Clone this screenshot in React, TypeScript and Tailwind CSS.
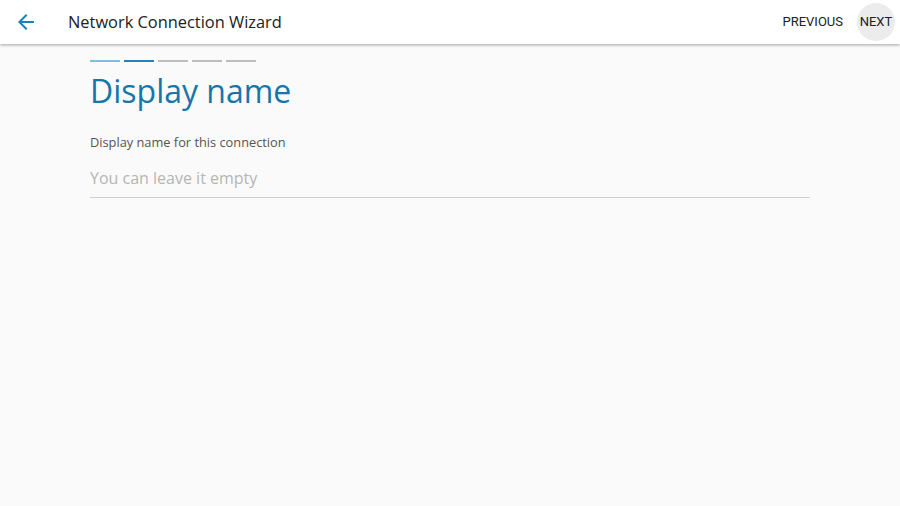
export default function App() {
  const steps = ["bg-[#7cbfe0]", "bg-[#1e84bd]", "bg-[#bdbdbd]", "bg-[#bdbdbd]", "bg-[#bdbdbd]"];

  return (
    <div className="h-[506px] w-[900px] overflow-hidden bg-[#fafafa] font-['Roboto',sans-serif]">
      <header className="relative z-10 flex h-[44px] items-center bg-white shadow-[0_1px_3px_rgba(0,0,0,0.35)]">
        <button className="ml-[14px] flex h-6 w-6 items-center justify-center text-[#1a80b8]">
          <svg width="24" height="24" viewBox="0 0 24 24" fill="currentColor">
            <path d="M20 11H7.83l5.59-5.59L12 4l-8 8 8 8 1.41-1.41L7.83 13H20v-2z" />
          </svg>
        </button>
        <h1 className="ml-[30px] text-[16.4px] text-[#212121] font-['Open_Sans',sans-serif]">
          Network Connection Wizard
        </h1>
        <div className="ml-auto flex items-center">
          <span className="mr-[14px] text-[13px] text-[#212121]">PREVIOUS</span>
          <span className="mr-[5px] flex h-[38px] w-[38px] items-center justify-center rounded-full bg-[#ececec] text-[13px] text-[#212121]">
            NEXT
          </span>
        </div>
      </header>

      <main className="px-[90px] pt-[16px]">
        <div className="flex gap-[4px]">
          {steps.map((c, i) => (
            <div key={i} className={`h-[2px] w-[30px] ${c}`} />
          ))}
        </div>
        <h2 className="mt-[9px] text-[32px] leading-[40px] text-[#1676aa] font-['Open_Sans',sans-serif]">
          Display name
        </h2>
        <label className="mt-[22px] block text-[12.8px] text-[#555] font-['Open_Sans',sans-serif]">
          Display name for this connection
        </label>
        <input
          placeholder="You can leave it empty"
          className="mt-[14px] block w-[720px] border-b border-[#cfcfcf] bg-transparent pb-[7px] text-[16px] outline-none placeholder:text-[#b5b5b5] font-['Open_Sans',sans-serif]"
        />
      </main>
    </div>
  );
}
